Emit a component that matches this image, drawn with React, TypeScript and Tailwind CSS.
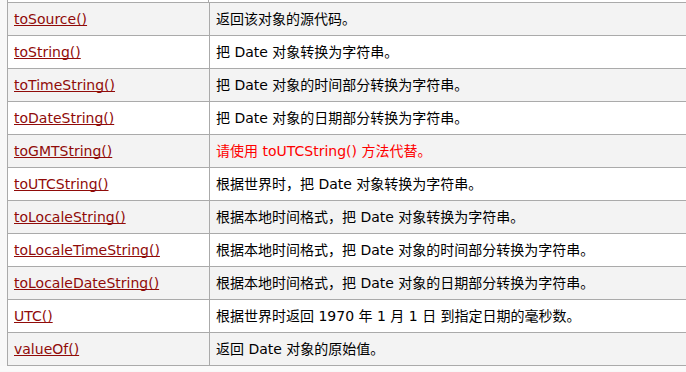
import React from "react";

const rows: { name: string; desc: React.ReactNode; red?: boolean }[] = [
  { name: "toSource()", desc: "返回该对象的源代码。" },
  { name: "toString()", desc: "把 Date 对象转换为字符串。" },
  { name: "toTimeString()", desc: "把 Date 对象的时间部分转换为字符串。" },
  { name: "toDateString()", desc: "把 Date 对象的日期部分转换为字符串。" },
  { name: "toGMTString()", desc: "请使用 toUTCString() 方法代替。", red: true },
  { name: "toUTCString()", desc: "根据世界时，把 Date 对象转换为字符串。" },
  { name: "toLocaleString()", desc: "根据本地时间格式，把 Date 对象转换为字符串。" },
  { name: "toLocaleTimeString()", desc: "根据本地时间格式，把 Date 对象的时间部分转换为字符串。" },
  { name: "toLocaleDateString()", desc: "根据本地时间格式，把 Date 对象的日期部分转换为字符串。" },
  { name: "UTC()", desc: "根据世界时返回 1970 年 1 月 1 日 到指定日期的毫秒数。" },
  { name: "valueOf()", desc: "返回 Date 对象的原始值。" },
];

export default function App() {
  return (
    <div
      className="w-[686px] h-[372px] overflow-hidden bg-[#f8f8f8] text-[14px] text-black"
      style={{ fontFamily: '"DejaVu Sans", "Noto Sans CJK SC", sans-serif' }}
    >
      <div className="ml-[7px] w-[700px] border-l border-[#aaaaaa] bg-white">
        <div className="flex h-[3px] border-b border-[#aaaaaa]">
          <div className="w-[201px] border-r border-[#aaaaaa]" />
          <div className="flex-1" />
        </div>
        {rows.map((r, i) => (
          <div
            key={r.name}
            className={`flex h-[33px] border-b border-[#aaaaaa] ${i % 2 === 0 ? "bg-[#f3f3f3]" : "bg-white"}`}
          >
            <div className="w-[202px] shrink-0 border-r border-[#aaaaaa] px-[6px] flex items-center">
              <a className="text-[#900b09] underline underline-offset-[1px] decoration-[#900b09] [text-decoration-skip-ink:none]">{r.name}</a>
            </div>
            <div className={`flex-1 px-[6px] flex items-center ${r.red ? "text-[#ff0000]" : ""}`}>
              {r.desc}
            </div>
          </div>
        ))}
      </div>
      <div className="h-[5px] bg-[#fafafa]" />
    </div>
  );
}
